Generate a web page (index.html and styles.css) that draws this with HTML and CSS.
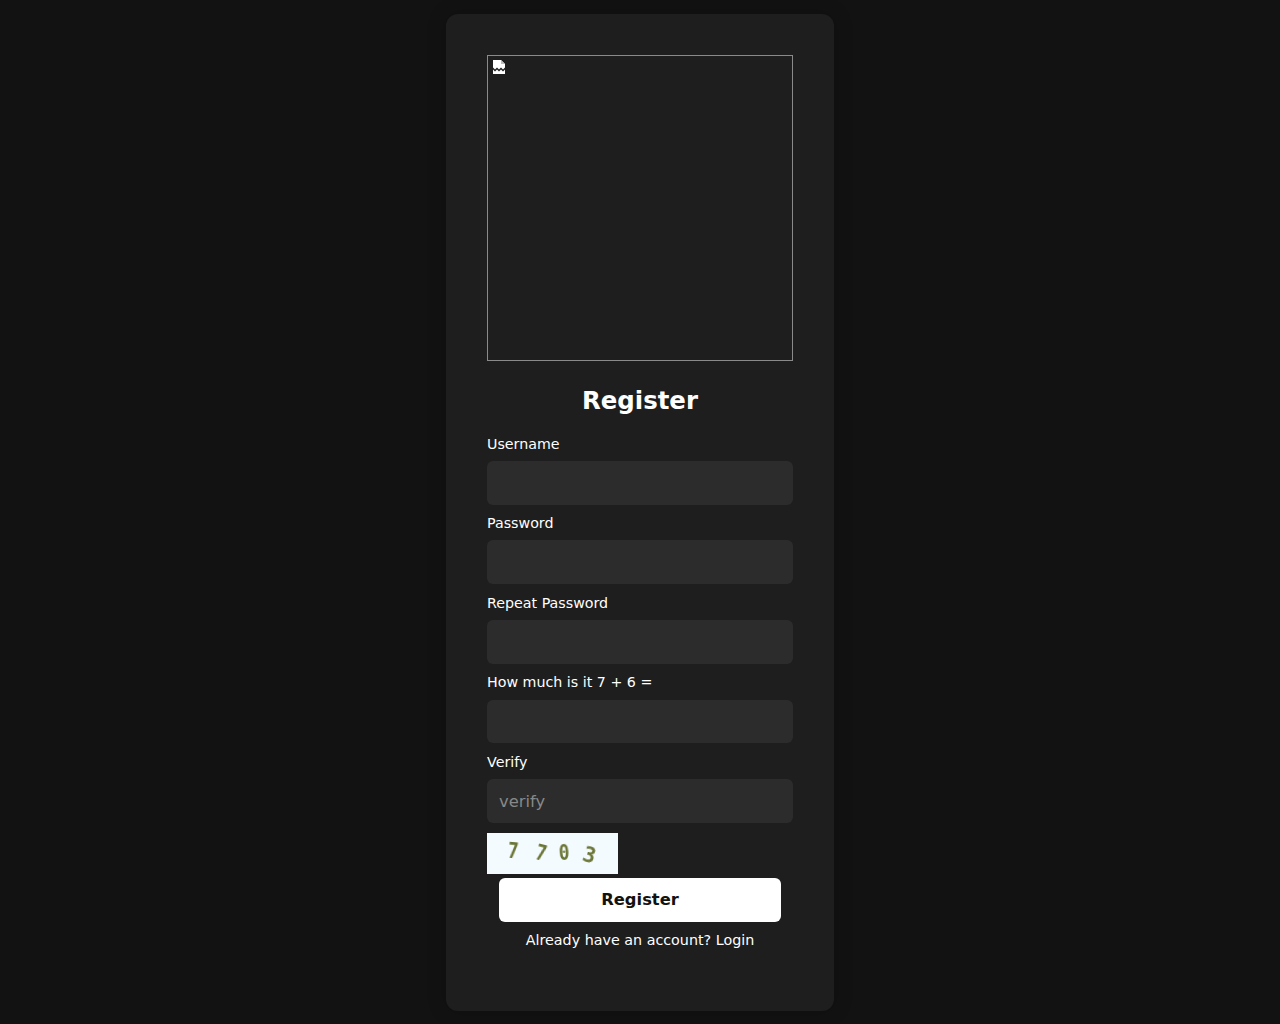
FILE: index.html
```html
<!DOCTYPE html>
<html lang="en">
<head>
    <meta charset="UTF-8">
    <meta name="viewport" content="width=device-width, initial-scale=1.0">
    <title>Register</title>
    <link rel="stylesheet" href="styles.css">
</head>
<body>
    <div class="register-card">
        <div class="logo-box">
            <svg class="broken-icon" width="14" height="16" viewBox="0 0 14 16">
                <path fill="#fff" d="M1 1h8l4 4v3.500l-2 2-2-2-2 2-2-2-2 2-2-2z"/>
                <path fill="#bdbdbd" d="M9 1l4 4H9z"/>
                <path fill="#fff" d="M1 10.500l2 2 2-2 2 2 2-2 2 2 2-2V15H1z"/>
            </svg>
        </div>
        <h1 class="title">Register</h1>
        <form class="register-form">
            <div class="form-group">
                <label class="form-label" for="username">Username</label>
                <input class="form-input" id="username" type="text">
            </div>
            <div class="form-group">
                <label class="form-label" for="password">Password</label>
                <input class="form-input" id="password" type="password">
            </div>
            <div class="form-group">
                <label class="form-label" for="repeat">Repeat Password</label>
                <input class="form-input" id="repeat" type="password">
            </div>
            <div class="form-group">
                <label class="form-label" for="sum">How much is it 7 + 6 =</label>
                <input class="form-input" id="sum" type="text">
            </div>
            <div class="form-group">
                <label class="form-label" for="verify">Verify</label>
                <input class="form-input" id="verify" type="text" placeholder="verify">
            </div>
            <div class="captcha">
                <span class="digit d1">7</span>
                <span class="digit d2">7</span>
                <span class="digit d3">0</span>
                <span class="digit d4">3</span>
            </div>
            <button class="submit-btn" type="button">Register</button>
        </form>
        <p class="login-link">Already have an account? <a href="#">Login</a></p>
    </div>
</body>
</html>
```

FILE: styles.css
```css
* {
    margin: 0;
    padding: 0;
    box-sizing: border-box;
}

body {
    font-family: "DejaVu Sans", sans-serif;
    background: #121212;
    color: #fff;
    min-height: 100vh;
    display: flex;
    align-items: center;
    justify-content: center;
}

.register-card {
    width: 388px;
    height: 997px;
    margin-top: 1px;
    background: #1e1e1e;
    border-radius: 12px;
    padding: 41px;
    box-shadow: 0 0 20px rgba(0, 0, 0, 0.2);
}

.logo-box {
    width: 306px;
    height: 306px;
    border: 1px solid #8a8a8a;
    padding: 3px 4px;
}

.broken-icon {
    display: block;
}

.title {
    font-size: 24.4px;
    font-weight: 700;
    text-align: center;
    line-height: 28px;
    margin-top: 26px;
    margin-bottom: 20.6px;
}

.form-group {
    margin-bottom: 10.6px;
}

.form-label {
    display: block;
    font-size: 14.24px;
    line-height: 17px;
    margin-bottom: 8.2px;
}

.form-input {
    display: block;
    width: 100%;
    height: 43.8px;
    background: #2c2c2c;
    border: none;
    border-radius: 6px;
    padding: 1px 12px 0;
    font-family: inherit;
    font-size: 16.32px;
    color: #fff;
}

.form-input::placeholder {
    color: #888;
}

.captcha {
    width: 131px;
    height: 41px;
    margin-top: -0.6px;
    background: #f3fbff;
    display: flex;
    align-items: center;
    padding-left: 20px;
}

.digit {
    display: inline-block;
    width: 10px;
    font-family: "DejaVu Sans Mono", monospace;
    font-size: 21px;
    font-weight: 700;
    color: #6b7535;
    text-align: center;
    filter: blur(0.4px);
}

.d1 { transform: translateY(-2px) rotate(5deg) scaleX(0.85); }
.d2 { margin-left: 18px; transform: rotate(14deg) scaleX(0.85); }
.d3 { margin-left: 13px; transform: rotate(-3deg) scaleX(0.85); }
.d4 { margin-left: 15px; transform: translateY(2px) rotate(16deg); }

.submit-btn {
    display: block;
    width: 282px;
    height: 44px;
    margin: 4px auto 0;
    background: #fff;
    color: #121212;
    border: none;
    border-radius: 6px;
    font-family: inherit;
    font-size: 16.32px;
    font-weight: 700;
}

.login-link {
    text-align: center;
    font-size: 14.3px;
    line-height: 17px;
    margin-top: 10px;
}

.login-link a {
    color: #fff;
    text-decoration: none;
}
```
